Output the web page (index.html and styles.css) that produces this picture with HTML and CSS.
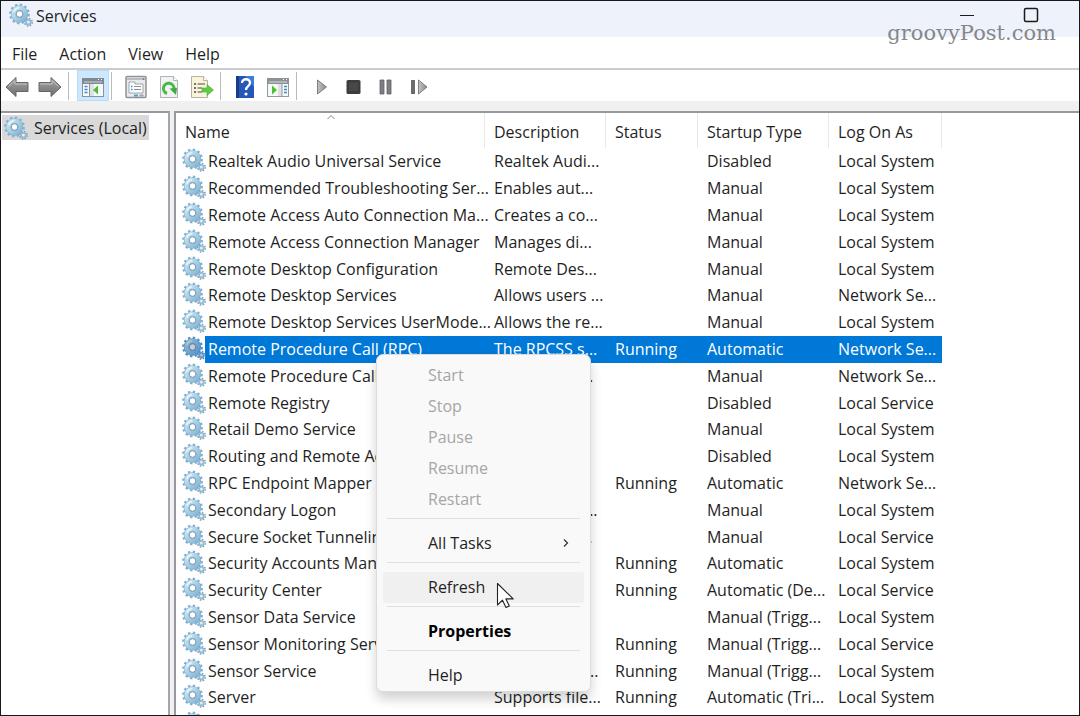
FILE: index.html
```html
<!DOCTYPE html>
<html lang="en">
<head>
<meta charset="utf-8">
<meta name="viewport" content="width=device-width, initial-scale=1">
<title>Services</title>
<link rel="stylesheet" href="styles.css">
</head>
<body>
<svg class="defs" aria-hidden="true">
  <defs>
    <linearGradient id="steel" x1="0" y1="0" x2="1" y2="1">
      <stop offset="0" stop-color="#c9e6f5"/><stop offset="1" stop-color="#85b7d6"/>
    </linearGradient>
    <linearGradient id="metal" x1="0" y1="0" x2="0" y2="1">
      <stop offset="0" stop-color="#a8a8a8"/><stop offset="1" stop-color="#6d6d6d"/>
    </linearGradient>
    <linearGradient id="play" x1="0" y1="0" x2="1" y2="0">
      <stop offset="0" stop-color="#c4c5c7"/><stop offset="1" stop-color="#85878b"/>
    </linearGradient>
    <symbol id="gear" viewBox="0 0 24 24">
      <circle cx="10.500" cy="11" r="9.200" fill="none" stroke="#86b0cc" stroke-width="2.400" stroke-dasharray="2.400 2.417"/>
      <circle cx="10.500" cy="11" r="6" fill="none" stroke="#80adcb" stroke-width="5.400"/>
      <circle cx="10.500" cy="11" r="6" fill="none" stroke="url(#steel)" stroke-width="4.400"/>
      <path d="M4.800 9a6 6 0 0 1 5.400-4.200" fill="none" stroke="#e8f6fc" stroke-width="1.600"/>
      <circle cx="10.500" cy="11" r="3.300" fill="#fff" stroke="#6f8fa8" stroke-width=".9"/>
      <circle cx="19.400" cy="19.200" r="3.800" fill="none" stroke="#7ba2bc" stroke-width="1.600" stroke-dasharray="1.500 1.484"/>
      <circle cx="19.400" cy="19.200" r="2.300" fill="#e4f1f8" stroke="#94bad2" stroke-width="1.800"/>
    </symbol>
  </defs>
</svg>
<div class="window">
  <header class="titlebar">
    <svg class="gear"><use href="#gear"/></svg>
    <h1 class="title">Services</h1>
    <div class="controls">
      <button class="control" aria-label="Minimize"><svg width="16" height="16" viewBox="0 0 16 16"><path d="M1 12.500h14" stroke="#1b1b1b" stroke-width="1"/></svg></button>
      <button class="control" aria-label="Maximize"><svg width="16" height="16" viewBox="0 0 16 16"><rect x="1.500" y="1.500" width="13" height="13" rx="1.500" fill="none" stroke="#1b1b1b" stroke-width="1.500"/></svg></button>
    </div>
    <span class="watermark">groovyPost.com</span>
  </header>
  <nav class="menubar">
    <button>File</button><button>Action</button><button>View</button><button>Help</button>
  </nav>
  <div class="toolbar" role="toolbar" aria-label="Tools">
    <button class="tool" aria-label="Back"><svg viewBox="0 0 24 24"><path d="M1 12 11 2.500v5h12v9H11v5z" fill="url(#metal)" stroke="#666" stroke-width="1" stroke-linejoin="round"/><path d="M3.500 11.500 10 5.500V9h12" fill="none" stroke="#c2c2c2"/></svg></button>
    <button class="tool" aria-label="Forward"><svg viewBox="0 0 24 24"><path d="M23 12 13 2.500v5H1v9h12v5z" fill="url(#metal)" stroke="#666" stroke-width="1" stroke-linejoin="round"/><path d="M2 9h12V5.500l6.500 6" fill="none" stroke="#c2c2c2"/></svg></button>
    <span class="divider"></span>
    <button class="tool active" aria-label="Show console tree"><svg viewBox="0 0 24 24"><rect x="1.500" y="3.500" width="21" height="18" fill="#f7f9fa" stroke="#8b949b"/><path d="M1 3h22v6H1z" fill="#7f8991"/><path d="M3 7h18" stroke="#cdd3d7"/><path d="M17 4.500h1M20 4.500h1" stroke="#fff"/><path d="M8.500 9v12" stroke="#8b949b"/><path d="M3.500 11.500h3M3.500 14.500h3M3.500 17.500h3" stroke="#3a8bd0" stroke-width="1.500"/><path d="M9 9h4v12H9z" fill="#dde2e6"/><path d="m12 15 5-4.500v9z" fill="#4bbd36"/></svg></button>
    <span class="divider"></span>
    <button class="tool" aria-label="Properties"><svg viewBox="0 0 24 24"><rect x="2" y="1.500" width="20" height="21" rx="1" fill="#e9ebed" stroke="#8d9296" stroke-width="1.500"/><path d="M3 4h15" stroke="#a7adb1" stroke-width="1.500"/><path d="M18.500 4h2" stroke="#555" stroke-width="1.500"/><path d="M5 7h6v2h8v9H5z" fill="#fff" stroke="#9ba6ae"/><path d="M7 11.500h1.500M7 14.500h1.500" stroke="#3a8bd0" stroke-width="1.500"/><path d="M10 11.500h7M10 14.500h7" stroke="#88939b"/><path d="M10 19.500h4v2h-4z" fill="#4f9ed1"/><path d="M15.500 20.500h4" stroke="#9ba6ae" stroke-width="2"/></svg></button>
    <button class="tool" aria-label="Refresh"><svg viewBox="0 0 24 24"><path d="M3.500 1.500h13l4 4v17h-17z" fill="#f1f2f3" stroke="#b0b3b6"/><path d="M16.500 1.500v4h4" fill="#fff" stroke="#b0b3b6"/><path d="M10 18.500A5.300 5.300 0 1 1 17 14" fill="none" stroke="#46b844" stroke-width="3"/><path d="m12.500 13.500 7.500-.5-1 7z" fill="#3bad3b"/></svg></button>
    <button class="tool" aria-label="Export list"><svg viewBox="0 0 24 24"><path d="M1.500 1.500h12l4 4v17h-16z" fill="#fbf4dd" stroke="#b9b1a0"/><path d="M13.500 1.500v4h4" fill="#fff" stroke="#b9b1a0"/><path d="M4 9h2M4 13h2M4 17h2" stroke="#444" stroke-width="1.500"/><path d="M7.500 9H15M7.500 13H12M7.500 17H12" stroke="#8a8171" stroke-width="1.300"/><path d="M12 13h5V9.500l6.500 5.500-6.500 5.500V17h-5z" fill="#62cb43" stroke="#49ae34" stroke-width=".6"/></svg></button>
    <span class="divider"></span>
    <button class="tool" aria-label="Help"><svg viewBox="0 0 24 24"><rect x="3" y="1" width="18" height="22" fill="#2457b8"/><path d="M3 1h3v22H3z" fill="#183c86"/><path d="M12 1h9v11z" fill="#3f7ddb"/><path d="M9 8c0-5 8-5 8 0 0 3-4 3.500-4 7" fill="none" stroke="#fff" stroke-width="2.300"/><circle cx="13" cy="19" r="1.600" fill="#fff"/></svg></button>
    <button class="tool" aria-label="Show action pane"><svg viewBox="0 0 24 24"><rect x="1.500" y="3.500" width="21" height="18" fill="#f7f8f8" stroke="#94999d"/><path d="M1 3h22v6H1z" fill="#8a9197"/><path d="M3 7h18" stroke="#d6dadc"/><path d="M17 4.500h1M20 4.500h1" stroke="#fff"/><path d="M12 9h4v12h-4z" fill="#dde1e4"/><path d="M16 9v12" stroke="#94999d"/><path d="M18 11.500h3M18 14.500h3M18 17.500h3" stroke="#3a8bd0" stroke-width="1.500"/><path d="m6 10.500 5 4.500-5 4.500z" fill="#4ac22e"/></svg></button>
    <span class="divider"></span>
    <button class="tool" aria-label="Start service"><svg viewBox="0 0 24 24"><path d="m8.500 5 9 7-9 7z" fill="url(#play)" stroke="#7d7f83"/></svg></button>
    <button class="tool" aria-label="Stop service"><svg viewBox="0 0 24 24"><rect x="4.500" y="5" width="14" height="14" rx="1.500" fill="#3b3c3e"/><rect x="7" y="7.500" width="9" height="8.500" fill="#47484a"/></svg></button>
    <button class="tool" aria-label="Pause service"><svg viewBox="0 0 24 24"><path d="M5 5h4v14H5zM12 5h4v14h-4z" fill="#7e7f82" stroke="#606164" stroke-width=".8"/></svg></button>
    <button class="tool" aria-label="Restart service"><svg viewBox="0 0 24 24"><path d="M3 5h4v14H3z" fill="#6a6b6e"/><path d="m10.500 5 8.500 7-8.500 7z" fill="url(#play)" stroke="#7d7f83"/></svg></button>
  </div>
  <main class="panes">
    <aside class="tree">
      <button class="node"><svg class="gear"><use href="#gear"/></svg>Services (Local)</button>
    </aside>
    <section class="list">
      <table class="services">
        <colgroup><col class="c-name"><col class="c-desc"><col class="c-status"><col class="c-type"><col class="c-logon"></colgroup>
        <thead><tr><th aria-sort="ascending">Name<svg class="sort" width="8" height="6" viewBox="0 0 8 6"><path d="m.5 5 3.500-3.500L7.500 5" fill="none" stroke="#888"/></svg></th><th>Description</th><th>Status</th><th>Startup Type</th><th>Log On As</th></tr></thead>
        <tbody>
          <tr><td><div class="name"><svg class="gear"><use href="#gear"/></svg><span>Realtek Audio Universal Service</span></div></td><td>Realtek Audi...</td><td></td><td>Disabled</td><td>Local System</td></tr>
          <tr><td><div class="name"><svg class="gear"><use href="#gear"/></svg><span>Recommended Troubleshooting Ser...</span></div></td><td>Enables aut...</td><td></td><td>Manual</td><td>Local System</td></tr>
          <tr><td><div class="name"><svg class="gear"><use href="#gear"/></svg><span>Remote Access Auto Connection Ma...</span></div></td><td>Creates a co...</td><td></td><td>Manual</td><td>Local System</td></tr>
          <tr><td><div class="name"><svg class="gear"><use href="#gear"/></svg><span>Remote Access Connection Manager</span></div></td><td>Manages di...</td><td></td><td>Manual</td><td>Local System</td></tr>
          <tr><td><div class="name"><svg class="gear"><use href="#gear"/></svg><span>Remote Desktop Configuration</span></div></td><td>Remote Des...</td><td></td><td>Manual</td><td>Local System</td></tr>
          <tr><td><div class="name"><svg class="gear"><use href="#gear"/></svg><span>Remote Desktop Services</span></div></td><td>Allows users ...</td><td></td><td>Manual</td><td>Network Se...</td></tr>
          <tr><td><div class="name"><svg class="gear"><use href="#gear"/></svg><span>Remote Desktop Services UserMode...</span></div></td><td>Allows the re...</td><td></td><td>Manual</td><td>Local System</td></tr>
          <tr class="selected"><td><div class="name"><svg class="gear"><use href="#gear"/></svg><span>Remote Procedure Call (RPC)</span></div></td><td>The RPCSS s...</td><td>Running</td><td>Automatic</td><td>Network Se...</td></tr>
          <tr><td><div class="name"><svg class="gear"><use href="#gear"/></svg><span>Remote Procedure Call (RPC) Locator</span></div></td><td>In Windows...</td><td></td><td>Manual</td><td>Network Se...</td></tr>
          <tr><td><div class="name"><svg class="gear"><use href="#gear"/></svg><span>Remote Registry</span></div></td><td>Enables re...</td><td></td><td>Disabled</td><td>Local Service</td></tr>
          <tr><td><div class="name"><svg class="gear"><use href="#gear"/></svg><span>Retail Demo Service</span></div></td><td>The Retail ...</td><td></td><td>Manual</td><td>Local System</td></tr>
          <tr><td><div class="name"><svg class="gear"><use href="#gear"/></svg><span>Routing and Remote Access</span></div></td><td>Offers rout...</td><td></td><td>Disabled</td><td>Local System</td></tr>
          <tr><td><div class="name"><svg class="gear"><use href="#gear"/></svg><span>RPC Endpoint Mapper</span></div></td><td>Resolves R...</td><td>Running</td><td>Automatic</td><td>Network Se...</td></tr>
          <tr><td><div class="name"><svg class="gear"><use href="#gear"/></svg><span>Secondary Logon</span></div></td><td>Enables star...</td><td></td><td>Manual</td><td>Local System</td></tr>
          <tr><td><div class="name"><svg class="gear"><use href="#gear"/></svg><span>Secure Socket Tunneling Protocol</span></div></td><td>Provides su...</td><td></td><td>Manual</td><td>Local Service</td></tr>
          <tr><td><div class="name"><svg class="gear"><use href="#gear"/></svg><span>Security Accounts Manager</span></div></td><td>The startu...</td><td>Running</td><td>Automatic</td><td>Local System</td></tr>
          <tr><td><div class="name"><svg class="gear"><use href="#gear"/></svg><span>Security Center</span></div></td><td>The WSCSV...</td><td>Running</td><td>Automatic (De...</td><td>Local Service</td></tr>
          <tr><td><div class="name"><svg class="gear"><use href="#gear"/></svg><span>Sensor Data Service</span></div></td><td>Delivers d...</td><td></td><td>Manual (Trigg...</td><td>Local System</td></tr>
          <tr><td><div class="name"><svg class="gear"><use href="#gear"/></svg><span>Sensor Monitoring Service</span></div></td><td>Monitors v...</td><td>Running</td><td>Manual (Trigg...</td><td>Local Service</td></tr>
          <tr><td><div class="name"><svg class="gear"><use href="#gear"/></svg><span>Sensor Service</span></div></td><td>A service for...</td><td>Running</td><td>Manual (Trigg...</td><td>Local System</td></tr>
          <tr><td><div class="name"><svg class="gear"><use href="#gear"/></svg><span>Server</span></div></td><td>Supports file...</td><td>Running</td><td>Automatic (Tri...</td><td>Local System</td></tr>
          <tr><td><div class="name"><svg class="gear"><use href="#gear"/></svg><span></span></div></td><td></td><td></td><td></td><td></td></tr>
        </tbody>
      </table>
    </section>
  </main>
  <div class="context" role="menu">
    <button role="menuitem" disabled>Start</button>
    <button role="menuitem" disabled>Stop</button>
    <button role="menuitem" disabled>Pause</button>
    <button role="menuitem" disabled>Resume</button>
    <button role="menuitem" disabled>Restart</button>
    <hr>
    <button role="menuitem">All Tasks<svg class="more" width="8" height="10" viewBox="0 0 8 10"><path d="m2 1.500 3.500 3.500L2 8.500" fill="none" stroke="#333" stroke-width="1.200"/></svg></button>
    <hr>
    <button role="menuitem" class="hover">Refresh</button>
    <hr>
    <button role="menuitem" class="default">Properties</button>
    <hr>
    <button role="menuitem">Help</button>
  </div>
  <svg class="cursor" width="20" height="28" viewBox="0 0 20 28" aria-hidden="true"><path d="M1.500 1.500v21.500l5-4.800 3.500 7.300 3.300-1.600-3.400-7h7.300z" fill="#fff" stroke="#222" stroke-width="1.100" stroke-linejoin="round"/></svg>
</div>
</body>
</html>
```
FILE: styles.css
```css
* { box-sizing: border-box; }

body {
  margin: 0;
  font-family: "Open Sans", "Noto Sans", sans-serif;
  font-size: 16px;
  line-height: 20px;
  color: #1f1f1f;
}

button {
  margin: 0;
  padding: 0;
  border: 0;
  background: none;
  font: inherit;
  color: inherit;
}

.defs { position: absolute; width: 0; height: 0; }

.window {
  position: relative;
  display: flex;
  flex-direction: column;
  height: 100vh;
  overflow: hidden;
  border: 1px solid #17171c;
  background: #f0f0f0;
}

.gear { flex: none; width: 24px; height: 24px; }

.titlebar {
  position: relative;
  display: flex;
  flex: none;
  align-items: flex-start;
  height: 36px;
  padding: 2px 24px 0 8px;
  background: #eef3fb;
}
.title { margin: 3px 0 0 3px; font-size: 16px; font-weight: 400; }
.controls { display: flex; gap: 16px; margin-left: auto; }
.control { width: 48px; height: 24px; }
.control svg { display: block; margin: 0 auto; }
.control:first-child svg { margin-top: -8px; }
.watermark {
  position: absolute;
  z-index: 1;
  top: 18px;
  right: 23px;
  font-family: "DejaVu Serif", serif;
  font-size: 21px;
  line-height: 28px;
  color: #85878b;
}

.menubar {
  display: flex;
  flex: none;
  gap: 22px;
  height: 33px;
  padding: 2px 11px 0;
  border-bottom: 2px solid #c9ccd0;
  background: #fff;
}

.toolbar {
  display: flex;
  flex: none;
  gap: 1px;
  height: 31px;
  background: #fff;
}
.tool { display: flex; align-items: center; justify-content: center; width: 32px; height: 31px; }
.tool svg { width: 24px; height: 24px; margin-top: 3px; }
.tool.active { background: #cce8ff; box-shadow: inset 0 0 0 1px #b5dcf8; }
.divider { width: 1px; height: 28px; margin: 2px 7px 0 1px; background: #b9bcbf; }

.panes {
  display: flex;
  flex: 1;
  gap: 4px;
  min-height: 0;
  margin-top: 10px;
}
.tree {
  flex: none;
  width: 169px;
  padding: 2px 1px;
  border-top: 2px solid #969a9f;
  border-right: 2px solid #a3a7ab;
  background: #fff;
}
.node {
  display: flex;
  align-items: center;
  gap: 6px;
  height: 25px;
  padding: 0 2px;
  background: #d9d9d9;
  white-space: nowrap;
}
.list {
  flex: 1;
  min-width: 0;
  overflow: hidden;
  border-top: 2px solid #969a9f;
  border-left: 2px solid #969a9f;
  background: #fff;
}

.services { width: 766px; border-collapse: collapse; table-layout: fixed; }
.c-name { width: 309px; }
.c-desc { width: 121px; }
.c-status { width: 92px; }
.c-type { width: 131px; }
.c-logon { width: 113px; }
.services th {
  position: relative;
  height: 35px;
  padding: 2px 0 0 9px;
  background: linear-gradient(#e8e8e8, #e8e8e8) right / 1px 100% no-repeat;
  font-weight: 400;
  text-align: left;
}
.sort { position: absolute; top: 1px; left: 151px; }
.services tbody tr { height: 27px; }
.services tbody tr:nth-child(5n) { height: 26px; }
.services td {
  height: inherit;
  padding: 0 0 1px 9px;
  white-space: nowrap;
}
.services td:first-child { padding: 0 0 0 6px; vertical-align: top; }
.name { display: flex; height: 26px; }
.name .gear { margin-right: -1px; }
.name span { flex: 1; padding-left: 3px; line-height: 27px; }
.selected { color: #fff; }
.selected .name { height: 27px; }
.selected .gear { filter: saturate(2) hue-rotate(8deg) brightness(.8); }
.selected .name span,
.selected td:not(:first-child) { background: #0078d7; }

.context {
  position: absolute;
  top: 353px;
  left: 375px;
  width: 215px;
  padding: 5px 6px 0;
  border: 1px solid #dcdcdc;
  border-radius: 7px;
  background: #f9f9f9;
  box-shadow: 0 7px 12px rgba(0, 0, 0, .18);
}
.context button {
  display: flex;
  align-items: center;
  width: 100%;
  height: 31px;
  padding: 0 14px 1px 45px;
  border-radius: 3px;
}
.context button:disabled { color: #a6a6a6; }
.context .hover { background: #f0f0f0; }
.context .default { font-weight: 700; color: #000; }
.context hr { height: 1px; margin: 3px 4px 9px; border: 0; background: #e0e0e0; }
.more { margin-left: auto; }

.cursor { position: absolute; top: 581px; left: 495px; }
```
